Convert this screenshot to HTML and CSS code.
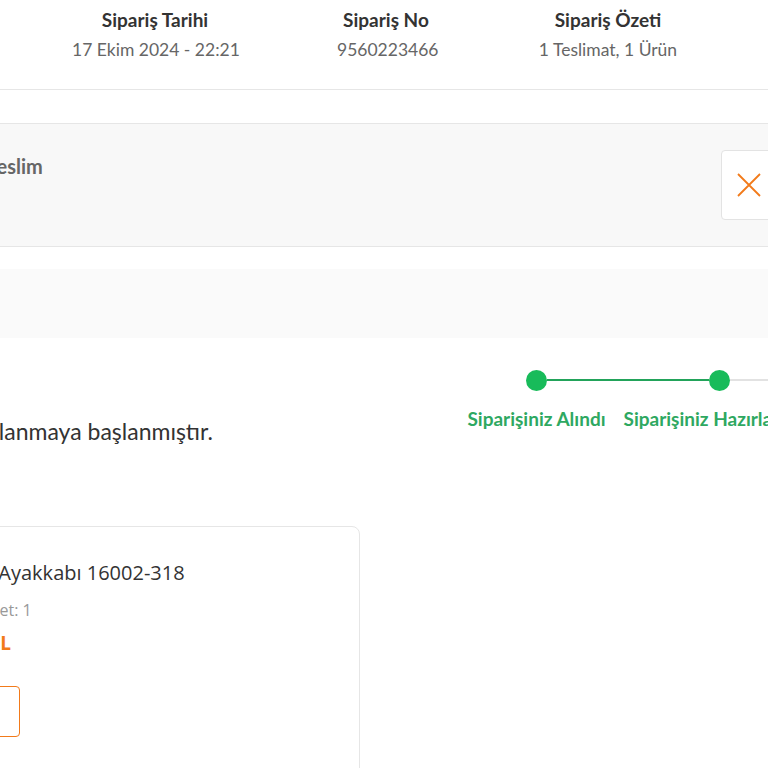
FILE: index.html
```html
<!DOCTYPE html>
<html lang="tr">
<head>
  <meta charset="UTF-8" />
  <meta name="viewport" content="width=device-width, initial-scale=1.0" />
  <title>Sipariş Detayı</title>
  <link rel="stylesheet" href="styles.css">
</head>
<body>
  <div class="page">
    <header class="order-head">
      <div class="head-col">
        <div class="head-title">Sipariş Tarihi</div>
        <div class="head-value">17 Ekim 2024 - 22:21</div>
      </div>
      <div class="head-col">
        <div class="head-title">Sipariş No</div>
        <div class="head-value">9560223466</div>
      </div>
      <div class="head-col">
        <div class="head-title">Sipariş Özeti</div>
        <div class="head-value">1 Teslimat, 1 Ürün</div>
      </div>
    </header>

    <section class="delivery">
      <div class="delivery-info">
        <div class="delivery-title">Teslim</div>
      </div>
      <button class="close-btn" aria-label="Kapat">
        <svg width="24" height="24" viewBox="0 0 24 24">
          <path d="M1 1 L23 23 M23 1 L1 23" stroke="#f27a1a" stroke-width="1.8" fill="none" />
        </svg>
      </button>
    </section>

    <div class="notice-band"></div>

    <section class="status">
      <p class="status-text">Siparişiniz hazırlanmaya başlanmıştır.</p>
      <ol class="stepper">
        <li class="step done">
          <div class="track"><span class="line off"></span><span class="dot"></span><span class="line on"></span></div>
          <div class="step-label">Siparişiniz Alındı</div>
        </li>
        <li class="step done">
          <div class="track"><span class="line on"></span><span class="dot"></span><span class="line"></span></div>
          <div class="step-label">Siparişiniz Hazırlanıyor</div>
        </li>
        <li class="step">
          <div class="track"><span class="line"></span><span class="dot"></span><span class="line"></span></div>
          <div class="step-label">Kargoya Verildi</div>
        </li>
      </ol>
    </section>

    <div class="product-card">
      <div class="product-img"></div>
      <div class="product-info">
        <div class="product-name">Erkek Spor Ayakkabı 16002-318</div>
        <div class="product-meta"><span>Beden: 42</span><span>Adet: 1</span></div>
        <div class="product-price">12.499,90 TL</div>
        <button class="review-btn">Değerlendir</button>
      </div>
    </div>
  </div>
</body>
</html>
```

FILE: styles.css
```css
html, body {
  margin: 0;
  padding: 0;
  height: 100%;
  overflow: hidden;
  background-color: #fff;
  font-family: 'Lato', 'Open Sans', sans-serif;
  color: #333;
}

.page {
  width: 1200px;
  margin-left: -200px;
}

/* order summary header */
.order-head {
  display: grid;
  grid-template-columns: 166px 98px 148px;
  column-gap: 99px;
  height: 90px;
  padding: 8px 0 0 272px;
  box-sizing: border-box;
  border-bottom: 1px solid #e6e6e6;
  text-align: center;
}

.head-title {
  font-size: 19px;
  font-weight: 700;
  line-height: 24px;
  color: #333;
  white-space: nowrap;
}

.head-value {
  margin-top: 6px;
  font-size: 17.5px;
  line-height: 24px;
  color: #666;
  white-space: nowrap;
}

/* delivery panel */
.delivery {
  display: flex;
  align-items: center;
  height: 124px;
  margin-top: 33px;
  padding-left: 187px;
  padding-right: 223px;
  box-sizing: border-box;
  background-color: #f8f8f8;
  border-top: 1px solid #e6e6e6;
  border-bottom: 1px solid #e6e6e6;
}

.delivery-info {
  flex: 1;
  align-self: flex-start;
  padding-top: 30px;
}

.delivery-title {
  font-size: 20px;
  font-weight: 700;
  line-height: 24px;
  color: #666;
}

.close-btn {
  width: 56px;
  height: 70px;
  padding: 0;
  display: flex;
  align-items: center;
  justify-content: center;
  background: #fff;
  border: 1px solid #e3e3e3;
  border-radius: 4px;
  cursor: pointer;
}

.notice-band {
  height: 69px;
  margin-top: 22px;
  background-color: #fafafa;
}

/* status + stepper */
.status {
  display: flex;
  align-items: flex-start;
  padding-top: 32px;
  padding-left: 44px;
}

.status-text {
  width: 601px;
  flex-shrink: 0;
  margin: 47px 0 0;
  font-size: 23px;
  line-height: 28px;
  color: #333;
  white-space: nowrap;
}

.stepper {
  display: flex;
  margin: 0;
  padding: 0;
  list-style: none;
}

.step {
  width: 183px;
  display: flex;
  flex-direction: column;
  align-items: center;
}

.track {
  width: 100%;
  height: 20px;
  display: flex;
  align-items: center;
}

.line {
  flex: 1;
  height: 2px;
  background-color: #e2e2e2;
}

.line.on {
  background-color: #22a35a;
}

.line.off {
  background: none;
}

.dot {
  width: 21px;
  height: 21px;
  border-radius: 50%;
  background-color: #e2e2e2;
}

.step.done .dot {
  background-color: #18bb5a;
}

.step-label {
  margin-top: 17px;
  font-size: 19px;
  font-weight: 700;
  line-height: 24px;
  color: #999;
  white-space: nowrap;
}

.step.done .step-label {
  color: #2ea861;
}

/* product card */
.product-card {
  display: flex;
  width: 520px;
  height: 300px;
  margin: 81px 0 0 40px;
  border: 1px solid #e6e6e6;
  border-radius: 8px;
  box-sizing: border-box;
}

.product-img {
  width: 52px;
}

.product-info {
  padding-top: 32px;
  font-family: 'Open Sans', sans-serif;
}

.product-name {
  font-size: 20px;
  line-height: 28px;
  color: #333;
  white-space: nowrap;
}

.product-meta {
  display: flex;
  gap: 12px;
  margin-top: 13px;
  font-size: 16px;
  line-height: 20px;
  color: #999;
}

.product-price {
  margin-top: 10px;
  font-size: 19px;
  font-weight: 700;
  line-height: 26px;
  color: #f27a1a;
  letter-spacing: 0.4px;
}

.review-btn {
  display: block;
  margin-top: 30px;
  width: 127px;
  height: 51px;
  background: #fff;
  border: 1px solid #f27a1a;
  border-radius: 4px;
  color: #f27a1a;
  font-family: 'Open Sans', sans-serif;
  font-size: 14px;
  font-weight: 600;
}
```
